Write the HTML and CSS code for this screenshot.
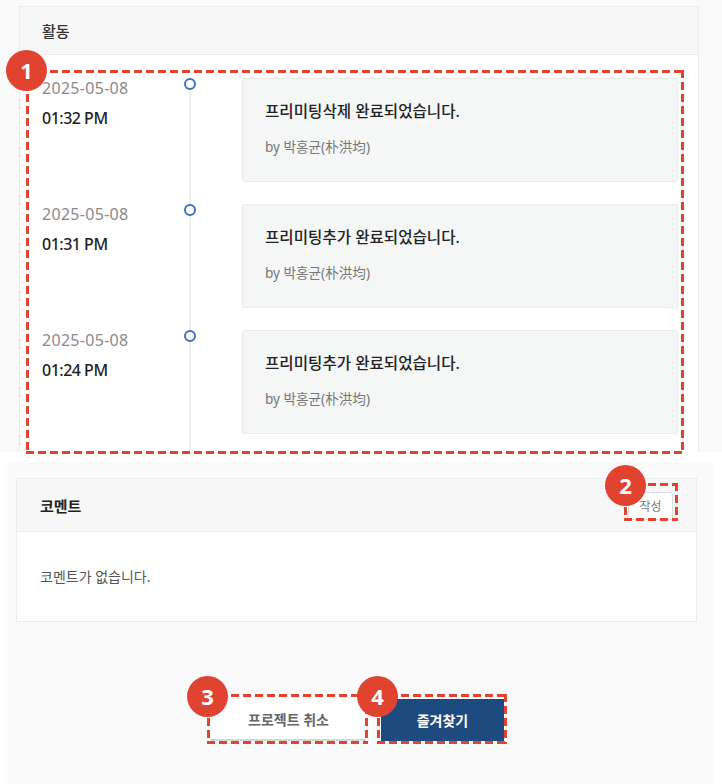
FILE: index.html
```html
<!DOCTYPE html>
<html lang="ko">
<head>
    <meta charset="UTF-8">
    <meta name="viewport" content="width=device-width, initial-scale=1.0">
    <title>프로젝트 상세</title>
    <link rel="stylesheet" href="styles.css">
</head>
<body>
    <div class="shot shot-top">
        <section class="panel">
            <div class="panel-head"><h2>활동</h2></div>
            <div class="timeline">
                <div class="tl-item">
                    <div class="tl-when">
                        <div class="tl-date">2025-05-08</div>
                        <div class="tl-time">01:32 PM</div>
                    </div>
                    <div class="tl-axis"><span class="tl-dot"></span></div>
                    <div class="tl-card">
                        <p class="tl-title">프리미팅삭제 완료되었습니다.</p>
                        <p class="tl-by">by 박홍균(朴洪均)</p>
                    </div>
                </div>
                <div class="tl-item">
                    <div class="tl-when">
                        <div class="tl-date">2025-05-08</div>
                        <div class="tl-time">01:31 PM</div>
                    </div>
                    <div class="tl-axis"><span class="tl-dot"></span></div>
                    <div class="tl-card">
                        <p class="tl-title">프리미팅추가 완료되었습니다.</p>
                        <p class="tl-by">by 박홍균(朴洪均)</p>
                    </div>
                </div>
                <div class="tl-item">
                    <div class="tl-when">
                        <div class="tl-date">2025-05-08</div>
                        <div class="tl-time">01:24 PM</div>
                    </div>
                    <div class="tl-axis"><span class="tl-dot"></span></div>
                    <div class="tl-card">
                        <p class="tl-title">프리미팅추가 완료되었습니다.</p>
                        <p class="tl-by">by 박홍균(朴洪均)</p>
                    </div>
                </div>
            </div>
        </section>
    </div>

    <div class="shot shot-bottom">
        <section class="panel">
            <div class="panel-head comment-head">
                <h2>코멘트</h2>
                <button class="btn-write">작성</button>
            </div>
            <div class="panel-body">코멘트가 없습니다.</div>
        </section>
        <div class="actions">
            <button class="btn btn-cancel">프로젝트 취소</button>
            <button class="btn btn-fav">즐겨찾기</button>
        </div>
    </div>

    <!-- guide markers -->
    <div class="anno anno-1"><span class="badge">1</span></div>
    <div class="anno anno-2"><span class="badge">2</span></div>
    <div class="anno anno-3"><span class="badge">3</span></div>
    <div class="anno anno-4"><span class="badge">4</span></div>
</body>
</html>
```

FILE: styles.css
```css
:root {
    --mark-red: #e04431;
    --navy: #1d4a7f;
    --line: #ebebeb;
    --head-bg: #f7f7f7;
    --shot-bg: #fafafa;
}

* {
    box-sizing: border-box;
}

body {
    margin: 0;
    position: relative;
    width: 722px;
    height: 784px;
    overflow: hidden;
    background: #ffffff;
    font-family: 'Noto Sans', 'Noto Sans CJK KR', sans-serif;
    color: #222;
}

p, h2 {
    margin: 0;
}

.shot {
    background: var(--shot-bg);
    overflow: hidden;
}

.shot-top {
    height: 452px;
    padding: 6px 23px 0 19px;
}

.shot-bottom {
    margin: 11px 0 0 7px;
    width: 707px;
    height: 321px;
    padding: 15px 17px 0 9px;
}

.panel {
    background: #fff;
    border: 1px solid var(--line);
}

.panel-head {
    height: 48px;
    background: var(--head-bg);
    border-bottom: 1px solid var(--line);
    display: flex;
    align-items: center;
    padding: 0 22px;
}

.panel-head h2 {
    font-size: 15px;
    font-weight: 500;
    color: #333;
}

/* timeline */
.timeline {
    padding: 23px 20px 0 22px;
}

.tl-item {
    display: flex;
}

.tl-when {
    width: 142px;
    flex-shrink: 0;
}

.tl-date {
    font-size: 16px;
    line-height: 20px;
    color: #8a8a8a;
    letter-spacing: 0.3px;
}

.tl-time {
    margin-top: 10px;
    font-size: 16px;
    line-height: 20px;
    font-weight: 500;
    color: #1e1e1e;
    letter-spacing: -0.5px;
}

.tl-axis {
    width: 12px;
    flex-shrink: 0;
    display: flex;
    flex-direction: column;
    align-items: center;
}

.tl-dot {
    width: 12px;
    height: 12px;
    border: 2px solid #3f70c2;
    border-radius: 50%;
    background: #fff;
}

.tl-axis::after {
    content: "";
    flex: 1;
    width: 2px;
    background: #f0f0f0;
}

.tl-card {
    flex: 1;
    margin: 0 0 22px 46px;
    height: 104px;
    background: #f5f6f6;
    border: 1px solid #ececec;
    border-radius: 2px;
    padding: 22px 22px 0;
}

.tl-title {
    font-size: 15.6px;
    line-height: 20px;
    font-weight: 500;
    color: #222;
}

.tl-by {
    margin-top: 16px;
    font-size: 13.6px;
    line-height: 20px;
    color: #777;
}

/* comments */
.comment-head {
    height: 53px;
    justify-content: space-between;
    padding: 0 23px 0 23px;
}

.comment-head h2 {
    font-weight: 700;
    color: #222;
}

.btn-write {
    width: 45px;
    height: 28px;
    margin-top: 2px;
    background: #fff;
    border: 1px solid #dcdcdc;
    border-radius: 2px;
    font-family: inherit;
    font-size: 12px;
    color: #777;
    padding: 0;
}

.panel-body {
    height: 89px;
    padding: 35px 23px 0;
    font-size: 14px;
    line-height: 20px;
    color: #555;
}

.actions {
    display: flex;
    justify-content: center;
    gap: 15px;
    margin-top: 77px;
    padding-left: 2px;
}

.btn {
    height: 42px;
    border: none;
    border-radius: 0;
    font-family: inherit;
    font-size: 14px;
    font-weight: 700;
    padding: 0;
}

.btn-cancel {
    width: 155px;
    background: #fff;
    color: #666;
    border-bottom: 2px solid #d6d6d6;
}

.btn-fav {
    width: 123px;
    background: var(--navy);
    color: #fff;
}

/* guide markers laid over the screenshot */
.anno {
    position: absolute;
    background:
        repeating-linear-gradient(90deg, var(--mark-red) 0 8px, transparent 8px 12px) top left / 100% 3px no-repeat,
        repeating-linear-gradient(90deg, var(--mark-red) 0 8px, transparent 8px 12px) bottom left / 100% 3px no-repeat,
        repeating-linear-gradient(180deg, var(--mark-red) 0 8px, transparent 8px 12px) top left / 3px 100% no-repeat,
        repeating-linear-gradient(180deg, var(--mark-red) 0 8px, transparent 8px 12px) top right / 3px 100% no-repeat;
}

.anno-1 { left: 26px; top: 70px; width: 658px; height: 384px; }
.anno-2 { left: 624px; top: 483px; width: 54px; height: 38px; }
.anno-3 { left: 207px; top: 694px; width: 161px; height: 50px; }
.anno-4 { left: 377px; top: 694px; width: 130px; height: 50px; }

.badge {
    position: absolute;
    left: -20px;
    top: -20px;
    width: 41px;
    height: 41px;
    border-radius: 50%;
    background: var(--mark-red);
    color: #fff;
    font-family: 'Open Sans', sans-serif;
    font-weight: 700;
    font-size: 22px;
    line-height: 41px;
    text-align: center;
}

.anno-2 .badge { left: -19px; top: -18px; }
.anno-3 .badge, .anno-4 .badge { top: -18px; }
```
